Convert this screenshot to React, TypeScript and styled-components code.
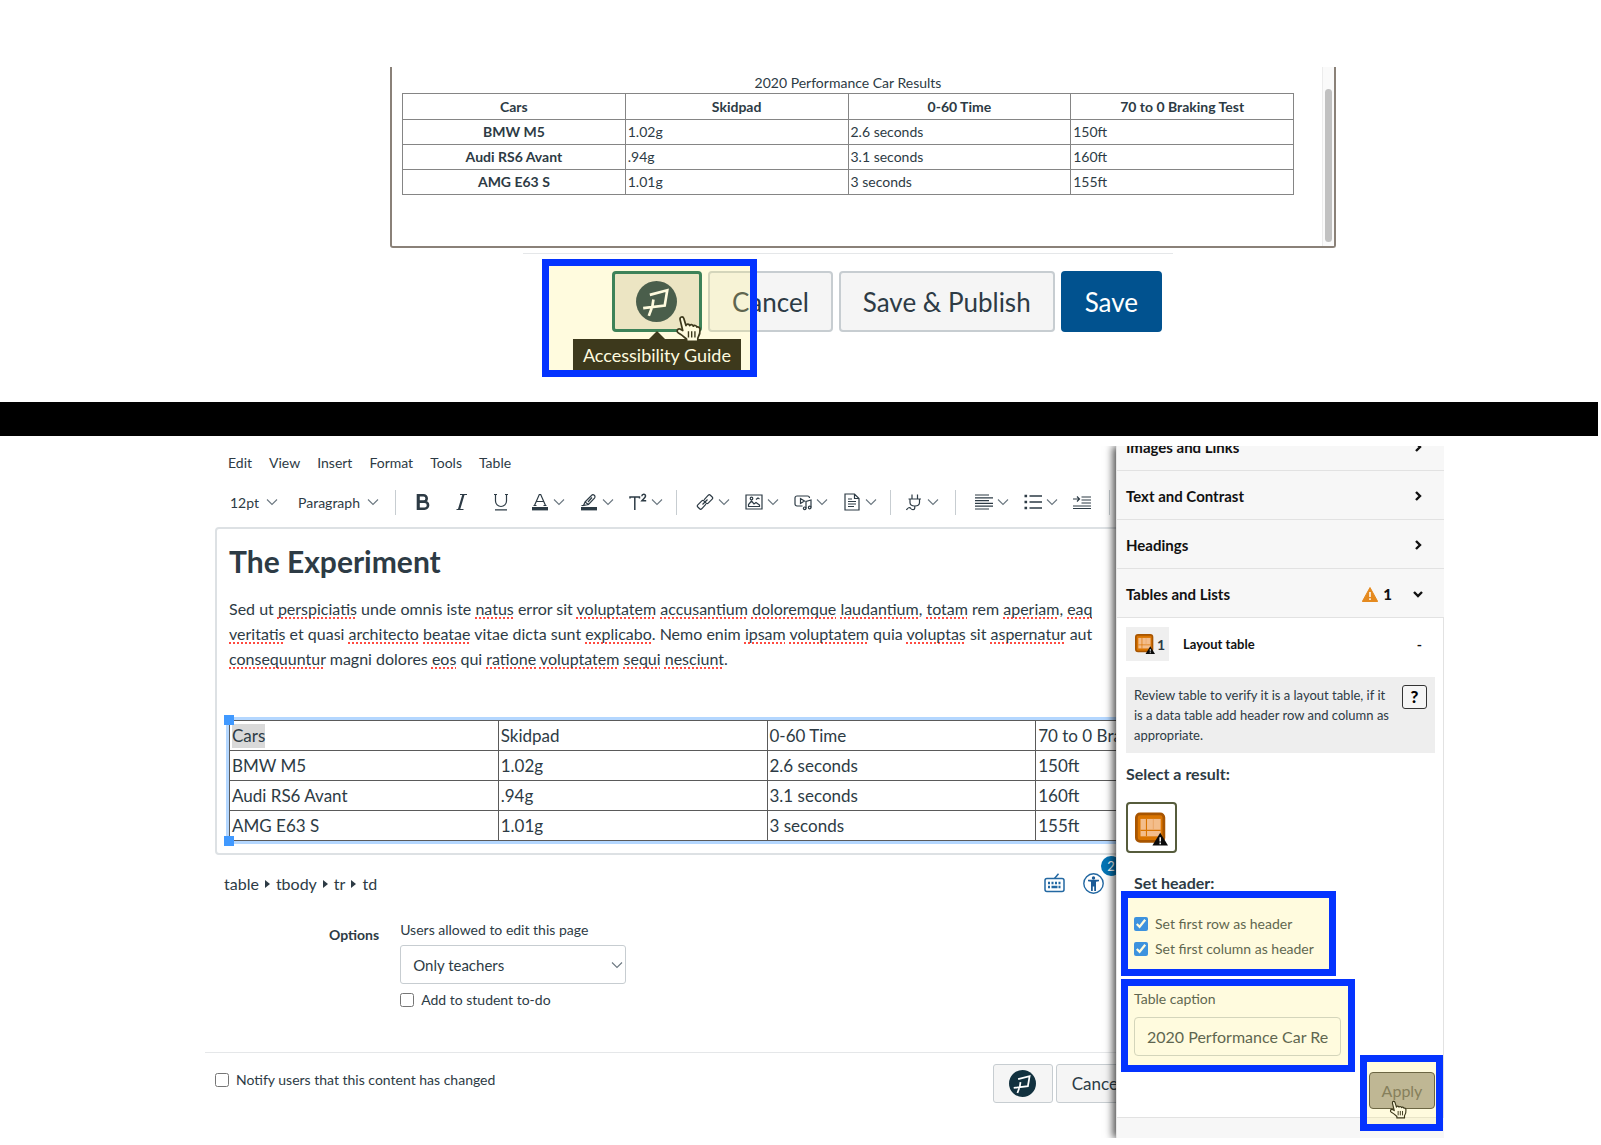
import React from "react";
import styled, { createGlobalStyle, css } from "styled-components";

const ink = "#2d3b45";
const blue = "#0433ff";
const line = "#c7cdd1";

const GlobalStyle = createGlobalStyle`
  *, *::before, *::after { box-sizing: border-box; }
  body { margin: 0; background: #fff; }
  body, button, input, select { font-family: Lato, "Liberation Sans", sans-serif; color: ${ink}; }
  h1, h2, h3, p { margin: 0; }
`;

/* ---------- shared parts ---------- */

const Highlight = styled.span<{ $inset: string }>`
  position: absolute;
  inset: ${(p) => p.$inset};
  z-index: 3;
  border: 7px solid ${blue};
  background: rgba(255, 239, 115, 0.24);
  background-clip: padding-box;
  pointer-events: none;
`;

const Pointer = styled.svg<{ $size: number; $left: number; $top: number }>`
  position: absolute;
  left: ${(p) => p.$left}px;
  top: ${(p) => p.$top}px;
  width: ${(p) => p.$size}px;
  height: ${(p) => p.$size}px;
  z-index: 2;
`;

const HandCursor = (p: { size: number; left: number; top: number }) => (
  <Pointer viewBox="0 0 26 26" $size={p.size} $left={p.left} $top={p.top} aria-hidden="true">
    <path
      d="M7.200 14.500 4.700 4.200C4.300 1.600 7.400.9 8.200 3.200L10.200 9.800C10.800 7.800 13.200 8 13.600 9.800C14.200 8.400 16.500 8.600 17 10.400C17.800 9.200 19.800 9.600 20.300 11.200C21.600 10.600 23 11.600 23.200 13.200C23.500 16 23 18.500 21.200 21.500V24.500H10.800V22.500C8.500 20.500 6.500 18.500 3.200 16.800C.9 15.200 2.200 12.400 4.600 13z"
      fill="#fff"
      stroke="#000"
      strokeWidth="1.6"
      strokeLinejoin="round"
    />
    <path d="M12.500 15v6M15.500 15v6M18.500 15v6" stroke="#000" strokeWidth="1.3" />
  </Pointer>
);

const PopeMark = ({ size }: { size: number }) => (
  <svg width={size} height={size} viewBox="0 0 40 40" aria-hidden="true">
    <circle cx="20" cy="20" r="20" fill="#12313f" />
    <path
      d="M13.500 13.500 30.500 9 28 24 7 26.500M17 18 16 24.500 12.500 34"
      fill="none"
      stroke="#fff"
      strokeWidth="2.6"
    />
  </svg>
);

const Checkbox = styled.input.attrs({ type: "checkbox" })`
  width: 14px;
  height: 14px;
  margin: 0;
  flex: none;
`;

const Check = styled.label`
  display: flex;
  align-items: center;
  gap: 7px;
  height: 25px;
  font-size: 14px;
`;

/* ---------- upper shot ---------- */

const Preview = styled.section`
  padding: 67px 265px 70px 390px;
`;

const Frame = styled.div`
  display: flex;
  border: 2px solid #8a8178;
  border-top: 0;
  border-radius: 0 0 3px 3px;
  height: 181px;
`;

const FrameBody = styled.div`
  flex: 1;
  padding: 6px 28px 0 10px;
`;

const Track = styled.div`
  width: 12px;
  padding: 22px 2px 4px;
  border-left: 1px solid #ececec;
  background: #fafafa;
  display: flex;
`;

const Thumb = styled.div`
  flex: 1;
  border-radius: 4px;
  background: #c1c1c1;
`;

const Results = styled.table`
  width: 100%;
  table-layout: fixed;
  border-collapse: collapse;
  font-size: 14px;
  line-height: 20px;
  caption { padding: 0; }
  th, td {
    height: 25px;
    padding: 0 2px;
    border: 1px solid #858585;
  }
  thead th { height: 26px; }
`;

const Actions = styled.div`
  display: flex;
  justify-content: flex-end;
  gap: 6px;
  margin: 5px 163px 0 133px;
  padding: 17px 11px 0 0;
  border-top: 1px solid #e5e7e9;
`;

const Button = styled.button<{ $large?: boolean; $primary?: boolean }>`
  flex: none;
  border: 1px solid ${line};
  border-radius: 3px;
  background: #f5f5f5;
  ${(p) =>
    p.$large
      ? css`height: 61px; padding: 0 22px; font-size: 26px; border-width: 2px; border-radius: 4px;`
      : css`height: 39px; padding: 0 15px; font-size: 17px;`}
  ${(p) => p.$primary && css`background: #01528f; border-color: #01528f; color: #fff;`}
`;

const GuideSlot = styled.div`
  position: relative;
`;

const GuideButton = styled(Button)<{ $focus?: boolean }>`
  display: flex;
  align-items: center;
  justify-content: center;
  padding: 0;
  width: ${(p) => (p.$large ? 90 : 60)}px;
  ${(p) => p.$focus && css`border: 3px solid #00604f; background: #e7e2dc;`}
`;

const Tooltip = styled.span`
  position: absolute;
  top: 68px;
  left: 50%;
  transform: translateX(-50%);
  height: 32px;
  padding: 0 10px;
  line-height: 32px;
  font-size: 18px;
  white-space: nowrap;
  background: #000;
  color: #fff;
  &::before {
    content: "";
    position: absolute;
    top: -8px;
    left: 50%;
    margin-left: -8px;
    border: 8px solid transparent;
    border-top: 0;
    border-bottom-color: #000;
  }
`;

const Divider = styled.div`
  height: 34px;
  margin-right: 3px;
  background: #000;
`;

/* ---------- lower shot ---------- */

const Workspace = styled.main`
  display: flex;
  margin: 10px 157px 0 205px;
  overflow: hidden;
`;

const EditorPane = styled.div`
  flex: 1;
  min-width: 0;
  overflow: hidden;
`;

const EditorInner = styled.div`
  width: calc(100% + 203px);
`;

const MenuBar = styled.nav`
  display: flex;
  align-items: center;
  gap: 17px;
  height: 33px;
  padding-left: 23px;
`;

const MenuItem = styled.button`
  padding: 0;
  border: 0;
  background: none;
  font-size: 14px;
`;

const Toolbar = styled.div`
  display: flex;
  align-items: center;
  height: 46px;
  margin-bottom: 2px;
  padding-left: 25px;
`;

const Group = styled.div<{ $gap: number }>`
  display: flex;
  gap: ${(p) => p.$gap}px;
`;

const Rule = styled.span<{ $before: number; $after: number }>`
  width: 1px;
  height: 25px;
  margin: 0 ${(p) => p.$after}px 0 ${(p) => p.$before}px;
  background: ${line};
`;

const Tool = styled.button<{ $gap?: number }>`
  display: flex;
  align-items: center;
  gap: ${(p) => p.$gap ?? 4}px;
  padding: 0;
  border: 0;
  background: none;
  font-size: 14px;
`;

const Icon = styled.svg.attrs({ viewBox: "0 0 18 18", width: 18, height: 18 })`
  display: block;
  fill: none;
  stroke: ${ink};
  stroke-width: 1.2;
`;

const Caret = () => (
  <svg width="12" height="8" viewBox="0 0 12 8" fill="none" stroke="#6b7780" strokeWidth="1.1">
    <path d="m1 1.500 5 5 5-5" />
  </svg>
);

const Document = styled.article`
  margin-left: 10px;
  padding: 15px 12px 12px;
  border: 2px solid #dde1e4;
  border-radius: 4px;
`;

const Title = styled.h1`
  margin-bottom: 18px;
  font-size: 30px;
  line-height: 34px;
`;

const Prose = styled.p`
  margin-bottom: 49px;
  font-size: 16px;
  line-height: 25px;
  white-space: nowrap;
`;

const Typo = styled.span`
  text-decoration: underline dotted #ff4a40 2px;
  text-decoration-skip-ink: none;
  text-underline-offset: 2px;
`;

const Selected = styled.div`
  position: relative;
  outline: 3px solid #b4d7ff;
`;

const Handle = styled.span<{ $bottom?: boolean }>`
  position: absolute;
  left: -5px;
  ${(p) => (p.$bottom ? "bottom: -5px;" : "top: -5px;")}
  width: 10px;
  height: 10px;
  background: #4099ff;
`;

const Grid = styled.table`
  width: 100%;
  table-layout: fixed;
  border-collapse: collapse;
  font-size: 17px;
  line-height: 24px;
  td {
    height: 30px;
    padding: 0 2px;
    border: 1px solid #5a5a5a;
  }
`;

const Mark = styled.span`
  display: inline-block;
  background: #d9d9d9;
`;

const StatusBar = styled.div`
  display: flex;
  align-items: center;
  gap: 18px;
  height: 58px;
  padding: 0 215px 2px 19px;
  font-size: 16px;
`;

const Crumbs = styled.div`
  display: flex;
  align-items: center;
  gap: 6px;
  flex: 1;
`;

const StatusButton = styled.button`
  position: relative;
  display: flex;
  padding: 0;
  border: 0;
  background: none;
`;

const Badge = styled.span`
  position: absolute;
  left: 18px;
  top: -17px;
  width: 20px;
  height: 20px;
  border-radius: 50%;
  background: #0374b5;
  color: #fff;
  font-size: 13px;
  line-height: 20px;
  text-align: center;
`;

const Options = styled.div`
  display: flex;
  gap: 21px;
  padding: 7px 0 40px 124px;
`;

const OptionsName = styled.h3`
  padding-top: 5px;
  font-size: 14px;
  line-height: 20px;
`;

const Field = styled.div`
  display: flex;
  flex-direction: column;
`;

const FieldLabel = styled.label`
  margin-bottom: 5px;
  font-size: 14px;
  line-height: 20px;
`;

const SelectBox = styled.div`
  position: relative;
  width: 226px;
  margin-bottom: 3px;
  svg { position: absolute; right: 3px; top: 16px; pointer-events: none; }
`;

const Select = styled.select`
  appearance: none;
  display: block;
  width: 100%;
  height: 39px;
  padding: 0 12px;
  border: 1px solid ${line};
  border-radius: 3px;
  background: #fff;
  font-size: 15px;
`;

const Footer = styled.footer`
  display: flex;
  justify-content: space-between;
  align-items: center;
  padding: 11px 181px 35px 10px;
  border-top: 1px solid #e5e7e9;
  & > label { margin-bottom: 8px; }
`;

/* ---------- side panel ---------- */

const Panel = styled.aside`
  position: relative;
  z-index: 1;
  flex: none;
  width: 328px;
  background: #f7f7f7;
  box-shadow: -3px 0 8px rgba(0, 0, 0, 0.7);
`;

const PanelScroll = styled.div`
  height: 692px;
  overflow: hidden;
`;

const PanelList = styled.div`
  margin-top: -24px;
  border-left: 1px solid #e6e6e6;
`;

const Section = styled.button`
  display: flex;
  align-items: center;
  width: 100%;
  height: 49px;
  padding: 2px 20px 0 9px;
  border: 0;
  border-bottom: 1px solid #e2e2e2;
  background: #f7f7f7;
  font-size: 15px;
  font-weight: 700;
  color: #111;
  text-align: left;
  span { flex: 1; }
  b { margin: 0 20px 0 5px; }
`;

const Chevron = ({ down }: { down?: boolean }) => (
  <svg width="12" height="12" viewBox="0 0 12 12" fill="none" stroke="#111" strokeWidth="2.4">
    <path d={down ? "M2 4l4 4 4-4" : "M4 2l4 4-4 4"} />
  </svg>
);

const PanelBody = styled.div`
  padding: 9px 8px 8px 9px;
  border-right: 1px solid #e2e2e2;
  border-bottom: 1px solid #e2e2e2;
  background: #fff;
`;

const Issue = styled.div`
  display: flex;
  align-items: center;
  margin-bottom: 16px;
  padding-right: 13px;
  font-size: 14px;
  font-weight: 700;
  color: #111;
  h2 { flex: 1; padding-left: 14px; font-size: 13px; }
`;

const Chip = styled.span`
  display: flex;
  align-items: center;
  gap: 2px;
  width: 43px;
  height: 34px;
  padding-left: 9px;
  background: #efefef;
  color: ${ink};
`;

const Note = styled.div`
  display: flex;
  align-items: flex-start;
  gap: 6px;
  padding: 8px;
  background: #eee;
  font-size: 13px;
  line-height: 20px;
  p { flex: 1; white-space: nowrap; }
`;

const Help = styled.button`
  width: 25px;
  height: 24px;
  padding: 0;
  border: 1px solid #333;
  border-radius: 3px;
  background: #f5f5f5;
  color: #000;
  font-size: 17px;
  font-weight: 900;
  line-height: 20px;
`;

const PanelHeading = styled.h3`
  margin: 11px 0 18px;
  font-size: 16px;
  line-height: 20px;
`;

const ResultButton = styled.button`
  display: flex;
  width: 51px;
  height: 51px;
  padding: 7px;
  border: 2px solid #565c3c;
  border-radius: 4px;
  background: #fff;
`;

const Form = styled.form`
  padding: 20px 0 0 8px;
`;

const Legend = styled.legend`
  padding: 0;
  margin-bottom: 18px;
  font-size: 16px;
  font-weight: 700;
  line-height: 20px;
`;

const Headers = styled.fieldset`
  position: relative;
  min-width: 0;
  margin: 0 0 28px;
  padding: 0;
  border: 0;
`;

const Caption = styled.div`
  position: relative;
`;

const CaptionLabel = styled.label`
  display: block;
  margin-bottom: 8px;
  font-size: 14px;
  line-height: 20px;
`;

const CaptionInput = styled.input`
  display: block;
  width: 207px;
  height: 39px;
  padding: 0 12px;
  border: 1px solid ${line};
  border-radius: 4px;
  background: #fff;
  font-size: 16px;
`;

const ApplyRow = styled.div`
  display: flex;
  justify-content: flex-end;
  margin-top: 16px;
`;

const ApplySlot = styled.div`
  position: relative;
`;

const Apply = styled.button`
  display: block;
  width: 66px;
  height: 37px;
  padding: 0;
  border: 1px solid #3f3c34;
  border-radius: 4px;
  background: #aba69e;
  color: #605c54;
  font-size: 16px;
`;

const TableGlyph = ({ size }: { size: number }) => (
  <svg width={size} height={size} viewBox="0 0 36 36" aria-hidden="true">
    <rect x="1.5" y="1.5" width="30" height="30" rx="4" fill="#d97400" stroke="#a85500" strokeWidth="3" />
    <rect x="6" y="7" width="22" height="19" fill="#f3bd8b" />
    <path d="M12.500 7v19M6 19.500h22" stroke="#d97400" strokeWidth="1.2" />
    <path d="M20 7v12" stroke="#e9a566" strokeWidth="1" />
    <path d="m27.500 22 8.500 14H19z" fill="#0a0a0a" />
    <path d="M27.500 27v4.500M27.500 32.800v1.700" stroke="#fff" strokeWidth="1.6" />
  </svg>
);

const cars = [
  ["BMW M5", "1.02g", "2.6 seconds", "150ft"],
  ["Audi RS6 Avant", ".94g", "3.1 seconds", "160ft"],
  ["AMG E63 S", "1.01g", "3 seconds", "155ft"],
];
const columns = ["Cars", "Skidpad", "0-60 Time", "70 to 0 Braking Test"];

const BoldIcon = () => (
  <Icon>
    <path
      d="M4 2.200h5.500a3.200 3.200 0 0 1 0 6.400H4zM4 8.600h6.500a3.500 3.500 0 0 1 0 7.100H4zM4.500 1v16"
      strokeWidth="2.6"
    />
  </Icon>
);
const ItalicIcon = () => (
  <Icon><path d="M7 1.500h7M3.500 16.500h7M11 1.500 6.500 16.500M10 1.500 5.500 16.500" /></Icon>
);
const UnderlineIcon = () => (
  <Icon><path d="M2 1.500h3M13 1.500h3M3.500 1.500V8a5.500 5.500 0 0 0 11 0V1.500M3 16.800h12" /></Icon>
);
const ColorIcon = () => (
  <Icon>
    <path d="m3.500 12.500 4.800-11h1.400l4.800 11M5.300 8.500h7.400M2.500 12.500h3M12.500 12.500h3" />
    <path d="M1 15.700h16" strokeWidth="3.4" />
  </Icon>
);
const PenIcon = () => (
  <Icon>
    <path d="m5 9 6.500-6.500a1.900 1.900 0 0 1 3 2.600L8.500 11.500 3.500 12.500zM5 9l3.500 2.500M8 9l4-4.500M1.500 12.500h3" />
    <path d="M1 15.700h16" strokeWidth="3.4" />
  </Icon>
);
const SuperIcon = () => (
  <Icon>
    <path d="M1 5.500V4h9.500v1.500M5.800 4v13" strokeWidth="1.5" />
    <path d="M12.800 3.200c.2-2.600 4-2.400 3.700 0-.2 1.600-2.200 2.700-3.600 4.500h4.300" strokeWidth="1.5" />
  </Icon>
);
const LinkIcon = () => (
  <Icon>
    <path d="m8 6.800 4.300-4.600a1.500 1.500 0 0 1 2.100 0l1.800 1.800a1.500 1.500 0 0 1 0 2.100l-4 4a1.500 1.500 0 0 1-2.100 0L8.800 8.800M10 11.200l-4.300 4.600a1.500 1.500 0 0 1-2.100 0l-1.800-1.800a1.500 1.500 0 0 1 0-2.100l4-4a1.500 1.500 0 0 1 2.100 0l1.300 1.300M6.500 11.500l5-5" />
  </Icon>
);
const ImageIcon = () => (
  <Icon>
    <path d="M1 2h16v14H1zM3.500 13.500v-2l3-3.500 2.500 3 2-1.500 3.500 2.500v1.500z" />
    <circle cx="6.5" cy="5.5" r="1.3" />
    <path d="M11 6.500 13 5l1.500 1" />
  </Icon>
);
const MediaIcon = () => (
  <Icon>
    <path d="M8.500 13H3a2 2 0 0 1-2-2V5a2 2 0 0 1 2-2h10.500a2 2 0 0 1 2 2M6.500 5.500v5l4-2.500zM12 15.500V8.500l5-1.500v7.500" />
    <circle cx="10.7" cy="15.3" r="1.3" />
    <circle cx="15.7" cy="14.5" r="1.3" />
  </Icon>
);
const DocIcon = () => (
  <Icon><path d="M2 1h9.500L16 5.500V17H2zM11.500 1v4.500H16M5 6h4M5 8.500h8M5 11h8M5 13.500h6" /></Icon>
);
const PlugIcon = () => (
  <Icon>
    <path d="M3.500 6h12.500M7 6V1.500M12.500 6V1.500M5 6v3.500c0 2 1.500 3.500 4.800 3.500s4.700-1.500 4.700-3.500V6M9.800 13v1.500c0 3-3 2.500-4 1-.8-1.500-3.300-1-4.300 1.500" />
  </Icon>
);
const AlignIcon = () => (
  <Icon><path d="M0 2h14M0 4.800h18M0 7.600h14M0 10.400h18M0 13.200h18M0 16h14" /></Icon>
);
const ListIcon = () => (
  <Icon>
    <path d="M5.500 3H18M5.500 9H18M5.500 15H18" strokeWidth="1.6" />
    <path d="M.5 3h2.600M.5 9h2.600M.5 15h2.600" strokeWidth="2.6" />
  </Icon>
);
const IndentIcon = () => (
  <Icon><path d="M8.500 4H18M8.500 7H18M8.500 10H18M0 13h18M0 15.500h18M0 6h6M4 3.500 6.500 6 4 8.500" /></Icon>
);

const Split = ({ label, children }: { label: string; children: React.ReactNode }) => (
  <Tool type="button" aria-label={label}>{children}<Caret /></Tool>
);

const Upper = () => (
  <Preview>
    <Frame>
      <FrameBody>
        <Results>
          <caption>2020 Performance Car Results</caption>
          <thead>
            <tr>{columns.map((c) => <th key={c} scope="col">{c}</th>)}</tr>
          </thead>
          <tbody>
            {cars.map(([name, ...rest]) => (
              <tr key={name}>
                <th scope="row">{name}</th>
                {rest.map((v) => <td key={v}>{v}</td>)}
              </tr>
            ))}
          </tbody>
        </Results>
      </FrameBody>
      <Track><Thumb /></Track>
    </Frame>
    <Actions>
      <GuideSlot>
        <GuideButton type="button" $large $focus aria-label="Open accessibility guide"><PopeMark size={41} /></GuideButton>
        <Tooltip role="tooltip">Accessibility Guide</Tooltip>
        <HandCursor size={28} left={63} top={44} />
        <Highlight $inset="-12px -55px -45px -70px" />
      </GuideSlot>
      <Button type="button" $large>Cancel</Button>
      <Button type="button" $large>Save &amp; Publish</Button>
      <Button type="button" $large $primary>Save</Button>
    </Actions>
  </Preview>
);

const Editor = () => (
  <EditorPane>
    <EditorInner>
      <MenuBar>
        {["Edit", "View", "Insert", "Format", "Tools", "Table"].map((m) => (
          <MenuItem key={m} type="button">{m}</MenuItem>
        ))}
      </MenuBar>
      <Toolbar>
        <Group $gap={20}>
          <Tool type="button" $gap={7}>12pt<Caret /></Tool>
          <Tool type="button" $gap={7}>Paragraph<Caret /></Tool>
        </Group>
        <Rule $before={16} $after={18} />
        <Group $gap={21}>
          <Tool type="button" aria-label="Bold"><BoldIcon /></Tool>
          <Tool type="button" aria-label="Italic"><ItalicIcon /></Tool>
          <Tool type="button" aria-label="Underline"><UnderlineIcon /></Tool>
          <Group $gap={15}>
            <Split label="Text color"><ColorIcon /></Split>
            <Split label="Highlight color"><PenIcon /></Split>
            <Split label="Superscript"><SuperIcon /></Split>
          </Group>
        </Group>
        <Rule $before={13} $after={19} />
        <Group $gap={15}>
          <Split label="Link"><LinkIcon /></Split>
          <Split label="Image"><ImageIcon /></Split>
          <Split label="Media"><MediaIcon /></Split>
          <Split label="Document"><DocIcon /></Split>
        </Group>
        <Rule $before={13} $after={14} />
        <Split label="Apps"><PlugIcon /></Split>
        <Rule $before={16} $after={19} />
        <Group $gap={15}>
          <Split label="Align"><AlignIcon /></Split>
          <Split label="List"><ListIcon /></Split>
          <Tool type="button" aria-label="Indent"><IndentIcon /></Tool>
        </Group>
        <Rule $before={18} $after={18} />
      </Toolbar>
      <Document>
        <Title>The Experiment</Title>
        <Prose>
          Sed ut <Typo>perspiciatis</Typo> unde omnis iste <Typo>natus</Typo> error sit <Typo>voluptatem</Typo>{" "}
          <Typo>accusantium</Typo> <Typo>doloremque</Typo> <Typo>laudantium</Typo>, <Typo>totam</Typo> rem{" "}
          <Typo>aperiam</Typo>, <Typo>eaq</Typo>
          <br />
          <Typo>veritatis</Typo> et quasi <Typo>architecto</Typo> <Typo>beatae</Typo> vitae dicta sunt{" "}
          <Typo>explicabo</Typo>. Nemo enim <Typo>ipsam</Typo> <Typo>voluptatem</Typo> quia <Typo>voluptas</Typo> sit{" "}
          <Typo>aspernatur</Typo> aut
          <br />
          <Typo>consequuntur</Typo> magni dolores <Typo>eos</Typo> qui <Typo>ratione</Typo> <Typo>voluptatem</Typo>{" "}
          <Typo>sequi</Typo> <Typo>nesciunt</Typo>.
        </Prose>
        <Selected>
          <Grid>
            <tbody>
              <tr>{columns.map((c, i) => <td key={c}>{i === 0 ? <Mark>{c}</Mark> : c}</td>)}</tr>
              {cars.map((row) => (
                <tr key={row[0]}>{row.map((v) => <td key={v}>{v}</td>)}</tr>
              ))}
            </tbody>
          </Grid>
          <Handle />
          <Handle $bottom />
        </Selected>
      </Document>
      <StatusBar>
        <Crumbs>
          {["table", "tbody", "tr", "td"].map((c, i) => (
            <React.Fragment key={c}>
              {i > 0 && <svg width="5" height="10" viewBox="0 0 5 10" fill={ink}><path d="M0 2v8l5-4z" /></svg>}
              <span>{c}</span>
            </React.Fragment>
          ))}
        </Crumbs>
        <StatusButton type="button" aria-label="Keyboard shortcuts">
          <svg width="21" height="20" viewBox="0 0 21 20" fill="none" stroke="#2368a2" strokeWidth="1.5">
            <rect x="1" y="5.5" width="19" height="13" rx="2" />
            <path d="M10.500 5.500 14.500.8" />
            <path d="M4 10h2M7.500 10h2M11 10h2M14.500 10h2M4 14h2M7.500 14h6M14.500 14h2" strokeWidth="2.4" />
          </svg>
        </StatusButton>
        <StatusButton type="button" aria-label="Accessibility checker">
          <svg width="21" height="21" viewBox="0 0 21 21">
            <circle cx="10.5" cy="10.5" r="9.7" fill="none" stroke="#2368a2" strokeWidth="1.4" />
            <circle cx="10.5" cy="5" r="1.7" fill="#1d5c97" />
            <path d="M5 6.800h11v1.500l-3 .5V18h-1.800v-4.500H9.800V18H8V8.800l-3-.5z" fill="#1d5c97" />
          </svg>
          <Badge>2</Badge>
        </StatusButton>
      </StatusBar>
      <Options>
        <OptionsName>Options</OptionsName>
        <Field>
          <FieldLabel htmlFor="editors">Users allowed to edit this page</FieldLabel>
          <SelectBox>
            <Select id="editors"><option>Only teachers</option></Select>
            <Caret />
          </SelectBox>
          <Check><Checkbox />Add to student to-do</Check>
        </Field>
      </Options>
      <Footer>
        <Check><Checkbox />Notify users that this content has changed</Check>
        <Group $gap={3}>
          <GuideButton type="button" aria-label="Accessibility guide"><PopeMark size={27} /></GuideButton>
          <Button type="button">Cancel</Button>
        </Group>
      </Footer>
    </EditorInner>
  </EditorPane>
);

const SidePanel = () => (
  <Panel>
    <PanelScroll>
      <PanelList>
        {["Images and Links", "Text and Contrast", "Headings"].map((s) => (
          <Section key={s} type="button"><span>{s}</span><Chevron /></Section>
        ))}
        <Section type="button">
          <span>Tables and Lists</span>
          <svg width="16" height="15" viewBox="0 0 16 15">
            <path d="M8 .5 15.700 14.500H.3z" fill="#e58a1f" stroke="#e58a1f" strokeLinejoin="round" />
            <path d="M8 5v5M8 11.300v1.700" stroke="#fff" strokeWidth="1.5" />
          </svg>
          <b>1</b>
          <Chevron down />
        </Section>
        <PanelBody>
          <Issue>
            <Chip><TableGlyph size={20} />1</Chip>
            <h2>Layout table</h2>
            <span>-</span>
          </Issue>
          <Note>
            <p>
              Review table to verify it is a layout table, if it<br />
              is a data table add header row and column as<br />
              appropriate.
            </p>
            <Help type="button">?</Help>
          </Note>
          <PanelHeading>Select a result:</PanelHeading>
          <ResultButton type="button" aria-label="Layout table result"><TableGlyph size={36} /></ResultButton>
          <Form onSubmit={(e) => e.preventDefault()}>
            <Headers>
              <Legend>Set header:</Legend>
              <Check><Checkbox defaultChecked />Set first row as header</Check>
              <Check><Checkbox defaultChecked />Set first column as header</Check>
              <Highlight $inset="-20px 99px -15px -13px" />
            </Headers>
            <Caption>
              <CaptionLabel htmlFor="caption">Table caption</CaptionLabel>
              <CaptionInput id="caption" defaultValue="2020 Performance Car Results" />
              <Highlight $inset="-10px 80px -16px -13px" />
            </Caption>
            <ApplyRow>
              <ApplySlot>
                <Apply type="submit">Apply</Apply>
                <HandCursor size={19} left={20} top={28} />
                <Highlight $inset="-17px -8px -22px -9px" />
              </ApplySlot>
            </ApplyRow>
          </Form>
        </PanelBody>
        <Section type="button"><span>Documents and Videos</span><Chevron /></Section>
      </PanelList>
    </PanelScroll>
  </Panel>
);

export default function App() {
  return (
    <>
      <GlobalStyle />
      <Upper />
      <Divider />
      <Workspace>
        <Editor />
        <SidePanel />
      </Workspace>
    </>
  );
}
